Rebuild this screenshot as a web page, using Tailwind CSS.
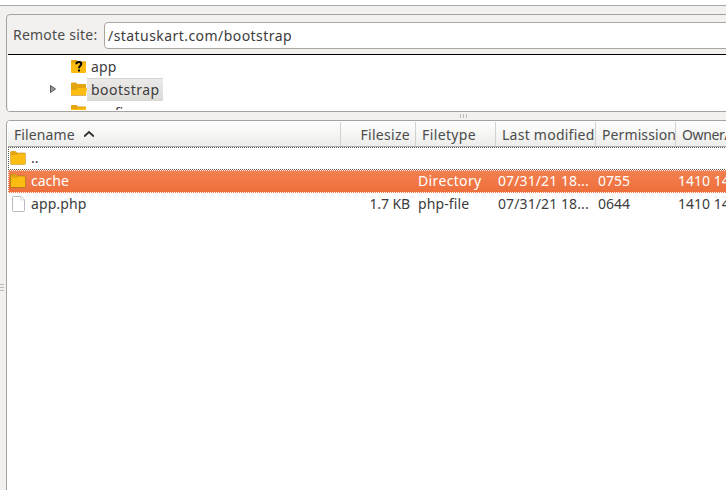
<!DOCTYPE html>
<html lang="en">
<head>
<meta charset="utf-8">
<title>Remote site</title>
<script src="https://cdn.jsdelivr.net/npm/@tailwindcss/browser@4"></script>
</head>
<body class="w-[726px] h-[490px] overflow-hidden bg-[#f2f1f0] text-[#3c3c3c] font-['Noto_Sans',sans-serif] text-[14px] leading-[22px] whitespace-nowrap">
<div class="flex flex-col w-[726px] h-[490px] overflow-hidden">
  <div class="h-[6px] shrink-0 bg-white border-b border-[#a9a7a5]"></div>
  <div class="h-[8px] shrink-0"></div>

  <!-- Remote directory tree -->
  <section class="ml-[6px] w-[730px] h-[98px] shrink-0 border border-[#a5a29f] rounded-[4px] overflow-hidden flex flex-col">
    <div class="h-[39px] shrink-0 flex items-start pt-[7px] pl-[6px]">
      <span class="w-[91px] shrink-0 pt-[2px] text-[#4c4c4c] tracking-[0.22px]">Remote site:</span>
      <div class="w-[640px] shrink-0 h-[27px] bg-white border border-[#aaa59f] rounded-[4px] pl-[3px] pt-[2px] tracking-[0.44px]">/statuskart.com/bootstrap</div>
    </div>
    <div class="flex-1 ml-px border-t border-t-black border-b border-b-white bg-white overflow-hidden">
      <div class="h-[23px] flex items-center pl-[63px]">
        <svg class="w-4 h-4 shrink-0" viewBox="0 0 16 16"><path d="M0 3q0-2 1.500-2h4L7 2.500h7q1 0 1 1V13q0 1-1 1H1q-1 0-1-1z" fill="#fdbc11"/><path d="M0 4V2q0-1 1-1h4.500L7 2.500h8V4z" fill="#e3a511"/><path d="M5.500 5.200V4.500Q5.700 3 8 3t2.300 2c0 1.800-2.300 1.900-2.300 4.200M7 11.500h2" fill="none" stroke="#000" stroke-width="2"/></svg>
        <span class="pl-[4px] tracking-[0.1px]">app</span>
      </div>
      <div class="h-[23px] flex items-center pl-[42px]">
        <svg class="w-[6px] h-[8px] mr-[15px] -mt-[2px] shrink-0" viewBox="0 0 6 8"><path d="M.5.500L5.500 4 .5 7.500z" fill="#999" stroke="#555"/></svg>
        <svg class="w-4 h-4 shrink-0 -mt-[2px]" viewBox="0 0 16 16"><path d="M0 2.500Q0 1.500 1 1.500h4L6.500 3H14q1 0 1 1v10H1q-1 0-1-1z" fill="#e3a511"/><path d="M0 14V10q1-1 3-1h2L6.500 7H16L15 14z" fill="#fdbc11"/><path d="M0 14.500h15" stroke="#c7902a" stroke-width=".7"/></svg>
        <span class="h-[23px] w-[76px] bg-gradient-to-b from-[#eceae8] to-[#dddbd8] border-y border-[#d8d6d3] pl-[4px] -mt-px tracking-[0.47px]">bootstrap</span>
      </div>
      <div class="h-[23px] flex pl-[63px] mt-[3px]">
        <svg class="w-4 h-4 shrink-0" viewBox="0 0 16 16"><path d="M0 2q0-1 1-1h4.500L7 2.500h7q1 0 1 1V14H0z" fill="#e3a511"/><path d="M0 5h6l1-1h8v10H0z" fill="#fdbc11"/></svg>
        <span class="pl-[4px] -mt-[2px]">config</span>
      </div>
    </div>
  </section>

  <!-- Splitter handle -->
  <div class="h-[8px] shrink-0 flex items-center justify-start gap-[2px] pl-[460px]">
    <i class="w-px h-[4px] bg-[#bbb]"></i><i class="w-px h-[4px] bg-[#bbb]"></i><i class="w-px h-[4px] bg-[#bbb]"></i>
  </div>

  <div class="flex flex-1">
    <div class="w-[6px] shrink-0 pt-[164px] flex flex-col gap-[2px]">
      <i class="w-[4px] h-px bg-[#bbb]"></i><i class="w-[4px] h-px bg-[#bbb]"></i><i class="w-[4px] h-px bg-[#bbb]"></i>
    </div>
    <!-- Remote file list -->
    <section class="w-[730px] shrink-0 h-[380px] border border-[#a5a29f] rounded-[4px] bg-white overflow-hidden pl-px">
      <div class="h-[26px] flex border-b border-[#aaa7a4] bg-gradient-to-b from-white to-[#ededeb] text-[#4c4c4c] pt-px *:shrink-0 *:pt-[2px]">
        <div class="w-[333px] border-r border-[#d4d2d0] pl-[6px] flex items-start"><span class="w-[70px] tracking-[0.1px]">Filename</span>
          <svg class="w-[10px] h-[7px] mt-[6px]" viewBox="0 0 10 7"><path d="M0 6.500L5 2l5 4.500" fill="none" stroke="#333" stroke-width="2"/></svg></div>
        <div class="w-[75px] border-r border-[#d4d2d0] pr-[5px] text-right tracking-[0.3px]">Filesize</div>
        <div class="w-[80px] border-r border-[#d4d2d0] pl-[6px] tracking-[0.38px]">Filetype</div>
        <div class="w-[100px] border-r border-[#d4d2d0] pl-[6px] overflow-hidden tracking-[0.25px]">Last modified</div>
        <div class="w-[80px] border-r border-[#d4d2d0] pl-[6px] overflow-hidden tracking-[0.1px]">Permissions</div>
        <div class="w-[60px] pl-[6px] tracking-[-0.4px]">Owner/Group</div>
      </div>
      <div class="h-[23px] border border-dotted border-[#555] flex items-start">
        <svg class="w-4 h-4 mt-[2px] ml-px shrink-0" viewBox="0 0 16 16"><path d="M.5 2.500Q.5 1.500 1.500 1.500h4L7 3h7.500q1 0 1 1v9.500q0 1-1 1H1.500q-1 0-1-1z" fill="#fdbc11" stroke="#c89b35" stroke-width=".6"/><path d="M.5 5V2.500q0-1 1-1h4.500L7.500 3h7v1H8L7 5z" fill="#e3a511"/></svg>
        <span class="pl-[5px] -mt-px">..</span>
      </div>
      <div class="h-[23px] border border-dotted border-[#fff] bg-gradient-to-b from-[#f4804f] to-[#ed6f3c] text-white flex items-start *:shrink-0">
        <svg class="w-4 h-4 mt-[2px] ml-px" viewBox="0 0 16 16"><path d="M.5 2.500Q.5 1.500 1.500 1.500h4L7 3h7.500q1 0 1 1v9.500q0 1-1 1H1.500q-1 0-1-1z" fill="#fdbc11" stroke="#9a6c14" stroke-width=".6"/><path d="M.5 5V2.500q0-1 1-1h4.500L7.500 3h7v1H8L7 5z" fill="#e3a511"/></svg>
        <span class="pl-[5px] w-[392px] -mt-px">cache</span>
        <span class="w-[80px] -mt-px tracking-[0.35px]">Directory</span><span class="w-[100px] -mt-px tracking-[0.1px]">07/31/21 18...</span><span class="w-[80px] -mt-px">0755</span><span class="-mt-px">1410 1410</span>
      </div>
      <div class="h-[23px] flex items-start pl-px *:shrink-0">
        <svg class="w-4 h-[18px] mt-[2px]" viewBox="0 0 16 18"><path d="M4.500 1.500h7.500L15.500 5v10.500q0 1-1 1h-10q-1 0-1-1v-13q0-1 1-1z" fill="#fff" stroke="#b9b9b9"/><path d="M12 1.500V5h3.500" fill="#eee" stroke="#d2d2d2" stroke-width=".7"/></svg>
        <span class="pl-[6px] w-[318px] tracking-[0.1px]">app.php</span>
        <span class="w-[67px] text-right mr-[8px] tracking-[-0.1px]">1.7 KB</span>
        <span class="w-[80px] tracking-[0.12px]">php-file</span><span class="w-[100px] tracking-[0.1px]">07/31/21 18...</span><span class="w-[80px]">0644</span><span>1410 1410</span>
      </div>
    </section>
  </div>
</div>
</body>
</html>
